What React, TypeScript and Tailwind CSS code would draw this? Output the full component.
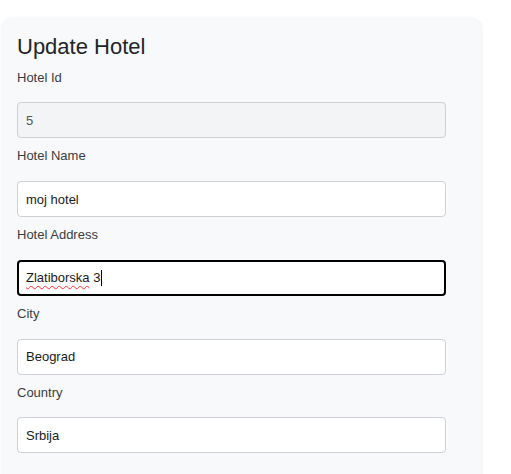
import React from 'react'

const fields = [
  { label: 'Hotel Name', value: 'moj hotel' },
]

const rest = [
  { label: 'City', value: 'Beograd' },
  { label: 'Country', value: 'Srbija' },
]

function Label({ children }: { children: React.ReactNode }) {
  return (
    <label className="mb-[14.8px] block text-[13px] leading-[20px] text-[#3a3d40]">
      {children}
    </label>
  )
}

function Field({ label, value }: { label: string; value: string }) {
  return (
    <div className="flex flex-col">
      <Label>{label}</Label>
      <input
        readOnly
        value={value}
        className="h-[36px] w-[429px] rounded-[4px] border border-[#cdd1d5] bg-white px-2 text-[13px] text-[#1a1a1a] outline-none"
      />
    </div>
  )
}

export default function App() {
  return (
    <div
      className="min-h-screen bg-white pt-[18px] pl-[1px]"
      style={{ fontFamily: '"Liberation Sans", Arial, sans-serif' }}
    >
      <div className="h-[470px] w-[480px] rounded-[10px] bg-[#f8f9fa] px-4 pt-[15.5px] shadow-[1px_0_3px_rgba(0,0,0,0.06)]">
        <h1 className="text-[22px] leading-[26px] text-[#212529]">
          Update Hotel
        </h1>

        <div className="mt-2 flex flex-col gap-2">
          <div className="flex flex-col">
            <Label>Hotel Id</Label>
            <input
              readOnly
              value="5"
              className="h-[36px] w-[429px] rounded-[4px] border border-[#cdd1d5] bg-[#f3f4f5] px-2 text-[13px] text-[#555] outline-none"
            />
          </div>

          {fields.map((f) => (
            <Field key={f.label} label={f.label} value={f.value} />
          ))}

          <div className="flex flex-col">
            <Label>Hotel Address</Label>
            <div className="flex h-[36px] w-[429px] items-center rounded-[4px] border-2 border-black bg-white px-[7px] text-[13px] text-[#1a1a1a]">
              <span className="underline decoration-red-500 decoration-wavy decoration-1 underline-offset-[3px]">
                Zlatiborska
              </span>
              <span>&nbsp;3</span>
              <span className="ml-[1px] inline-block h-[16px] w-px bg-black" />
            </div>
          </div>

          {rest.map((f) => (
            <Field key={f.label} label={f.label} value={f.value} />
          ))}
        </div>
      </div>
    </div>
  )
}
